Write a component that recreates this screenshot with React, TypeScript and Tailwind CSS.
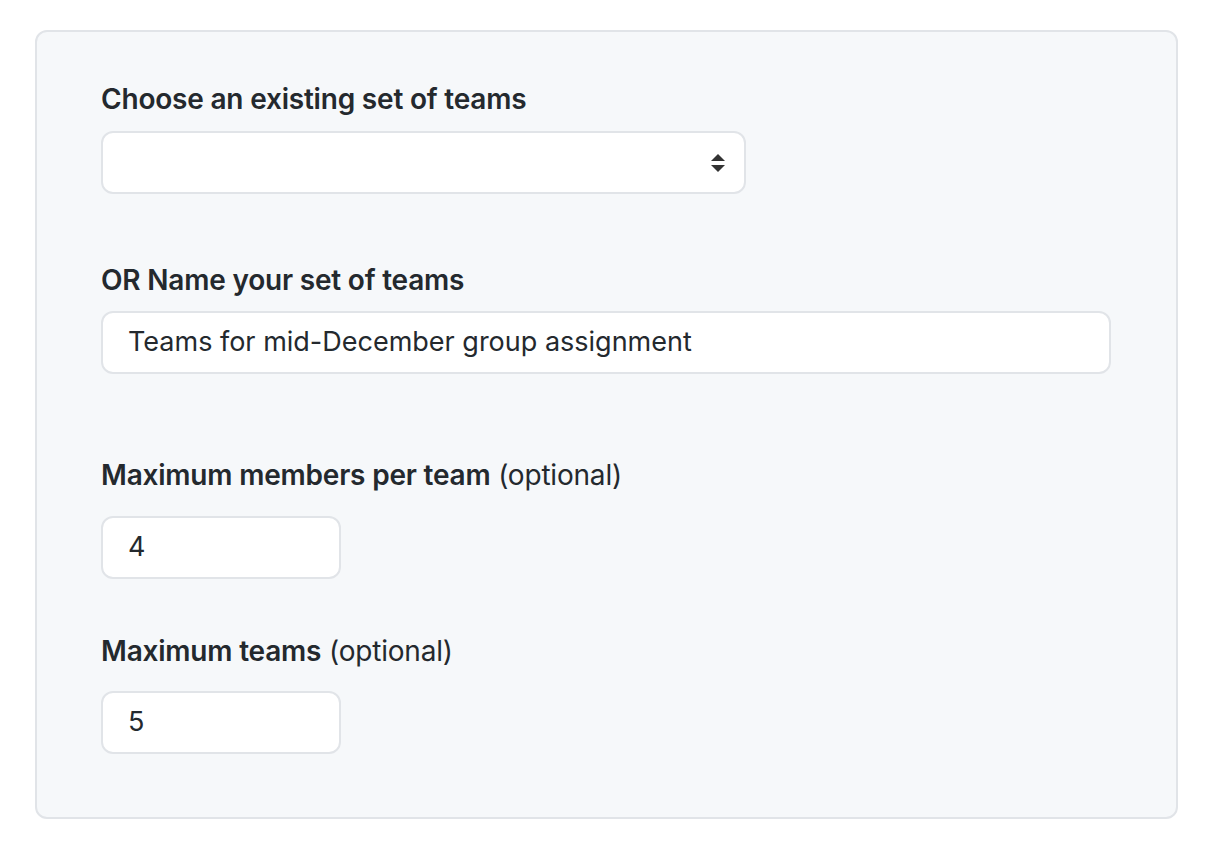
export default function App() {
  return (
    <div className="min-h-screen bg-white pt-[30px] pl-[35px] font-['Inter',sans-serif] text-[#24292e]">
      <div className="w-[1143px] h-[789px] rounded-[12px] border-2 border-[#e1e4e8] bg-[#f6f8fa] pl-[64px] pt-[47px]">
        {/* existing set */}
        <label className="block text-[28px] font-semibold leading-[40px] tracking-[-0.2px]">Choose an existing set of teams</label>
        <div className="relative mt-[12px] h-[63px] w-[645px] rounded-[12px] border-2 border-[#e1e4e8] bg-white">
          <svg className="absolute right-[18px] top-[21px]" width="16" height="18" viewBox="0 0 16 18">
            <path d="M8 0 L15 7 L1 7 Z" fill="#333" />
            <path d="M1 11 L15 11 L8 18 Z" fill="#333" />
          </svg>
        </div>

        {/* name */}
        <label className="mt-[66px] block text-[28px] font-semibold leading-[40px] tracking-[-0.2px]">OR Name your set of teams</label>
        <div className="mt-[11px] flex h-[63px] w-[1010px] items-center rounded-[12px] border-2 border-[#e1e4e8] bg-white pl-[25px] text-[27px]">
          Teams for mid-December group assignment
        </div>

        {/* max members */}
        <label className="mt-[81px] block text-[28px] leading-[40px] tracking-[-0.2px]">
          <span className="font-semibold">Maximum members per team</span> (optional)
        </label>
        <div className="mt-[21px] flex h-[63px] w-[240px] items-center rounded-[12px] border-2 border-[#e1e4e8] bg-white pl-[25px] text-[27px]">
          4
        </div>

        {/* max teams */}
        <label className="mt-[52px] block text-[28px] leading-[40px] tracking-[-0.2px]">
          <span className="font-semibold">Maximum teams</span> (optional)
        </label>
        <div className="mt-[20px] flex h-[63px] w-[240px] items-center rounded-[12px] border-2 border-[#e1e4e8] bg-white pl-[25px] text-[27px]">
          5
        </div>
      </div>
    </div>
  )
}
